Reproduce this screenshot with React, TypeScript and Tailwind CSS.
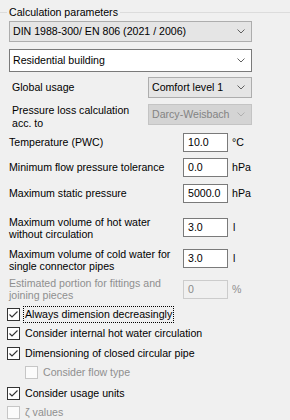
function Chevron({ disabled = false }: { disabled?: boolean }) {
  return (
    <svg width="8" height="5" viewBox="0 0 8 5" fill="none" className="shrink-0">
      <polyline
        points="0.5,0.5 4,4 7.5,0.5"
        stroke={disabled ? "#b0b0b0" : "#606060"}
        strokeWidth={1}
      />
    </svg>
  )
}

function Combo({
  value,
  variant = "gray",
  className = "",
}: {
  value: string
  variant?: "gray" | "white" | "disabled"
  className?: string
}) {
  const look =
    variant === "white"
      ? "bg-white border-[#7a7a7a] text-black"
      : variant === "disabled"
        ? "bg-[#d4d4d4] border-[#c4c4c4] text-[#838383]"
        : "bg-[#e5e5e5] border-[#adadad] text-black"
  return (
    <div
      className={`flex items-center justify-between border pl-[3px] pr-[6px] ${look} ${className}`}
    >
      <span className="whitespace-nowrap leading-[13px]">{value}</span>
      <Chevron disabled={variant === "disabled"} />
    </div>
  )
}

function NumberBox({ value, disabled = false }: { value: string; disabled?: boolean }) {
  return (
    <div
      className={`flex h-[19px] w-[45px] shrink-0 items-center border pl-[4px] leading-[13px] ${
        disabled
          ? "border-[#cccccc] bg-[#f0f0f0] text-[#8a8a8a]"
          : "border-[#7a7a7a] bg-white text-black"
      }`}
    >
      {value}
    </div>
  )
}

function Check({
  label,
  checked = false,
  disabled = false,
  focused = false,
  className = "",
}: {
  label: string
  checked?: boolean
  disabled?: boolean
  focused?: boolean
  className?: string
}) {
  return (
    <div className={`flex h-[13px] items-center ${className}`}>
      <div
        className={`flex h-[13px] w-[13px] shrink-0 items-center justify-center border ${
          disabled ? "border-[#c6c6c6] bg-[#fbfbfb]" : "border-[#333333] bg-white"
        }`}
      >
        {checked && (
          <svg width="11" height="11" viewBox="0 0 11 11" fill="none">
            <polyline points="1.5,5.5 4,8 9.5,2.5" stroke="#333333" strokeWidth={1.1} />
          </svg>
        )}
      </div>
      <span
        className={`ml-[3px] whitespace-nowrap leading-[13px] ${
          disabled ? "text-[#8f8f8f]" : "text-black"
        } ${focused ? "border border-dotted border-black px-[1px] py-[1px]" : "border border-transparent px-[1px] py-[1px]"}`}
      >
        {label}
      </span>
    </div>
  )
}

export default function App() {
  return (
    <div
      className="h-[420px] w-[290px] overflow-hidden bg-[#f0f0f0] text-[10.6px] text-black"
      style={{ fontFamily: '"Liberation Sans", Arial, sans-serif' }}
    >
      {/* group box header */}
      <div className="mt-[6px] flex h-[13px] items-center">
        <div className="h-px w-[7px] bg-[#dcdcdc]" />
        <span className="px-[2px] leading-[13px] whitespace-nowrap">Calculation parameters</span>
        <div className="h-px flex-1 bg-[#dcdcdc]" />
      </div>

      <div className="flex flex-col pl-[9px] pr-[38px]">
        <Combo value="DIN 1988-300/ EN 806 (2021 / 2006)" className="mt-[2px] h-[21px]" />
        <Combo value="Residential building" variant="white" className="mt-[7px] h-[23px]" />

        <div className="mt-[5px] flex h-[21px] items-center justify-between">
          <span className="pl-[3px] leading-[13px]">Global usage</span>
          <Combo value="Comfort level 1" className="h-[21px] w-[104px]" />
        </div>

        <div className="mt-[6px] flex h-[26px] items-start justify-between">
          <span className="pl-[3px] leading-[13px]">
            Pressure loss calculation
            <br />
            acc. to
          </span>
          <Combo value="Darcy-Weisbach" variant="disabled" className="h-[21px] w-[104px]" />
        </div>
      </div>

      <div className="flex flex-col pl-[9px]">
        <div className="mt-[3px] flex h-[19px] items-center">
          <span className="w-[174px] leading-[13px]">Temperature (PWC)</span>
          <NumberBox value="10.0" />
          <span className="ml-[4px] leading-[13px]">°C</span>
        </div>

        <div className="mt-[6px] flex h-[19px] items-center">
          <span className="w-[174px] leading-[13px]">Minimum flow pressure tolerance</span>
          <NumberBox value="0.0" />
          <span className="ml-[4px] leading-[13px]">hPa</span>
        </div>

        <div className="mt-[7px] flex h-[19px] items-center">
          <span className="w-[174px] leading-[13px]">Maximum static pressure</span>
          <NumberBox value="5000.0" />
          <span className="ml-[4px] leading-[13px]">hPa</span>
        </div>

        <div className="mt-[13px] flex h-[26px] items-start">
          <span className="w-[174px] leading-[12px]">
            Maximum volume of hot water
            <br />
            without circulation
          </span>
          <div className="mt-[2px] flex items-center">
            <NumberBox value="3.0" />
            <span className="ml-[5px] leading-[13px]">l</span>
          </div>
        </div>

        <div className="mt-[6px] flex h-[26px] items-start">
          <span className="w-[174px] leading-[12px]">
            Maximum volume of cold water for
            <br />
            single connector pipes
          </span>
          <div className="mt-[1px] flex items-center">
            <NumberBox value="3.0" />
            <span className="ml-[5px] leading-[13px]">l</span>
          </div>
        </div>

        <div className="mt-[3px] flex h-[26px] items-start text-[#8f8f8f]">
          <span className="w-[174px] leading-[12px]">
            Estimated portion for fittings and
            <br />
            joining pieces
          </span>
          <div className="mt-[3px] flex items-center">
            <NumberBox value="0" disabled />
            <span className="ml-[4px] leading-[13px]">%</span>
          </div>
        </div>
      </div>

      <div className="flex flex-col pl-[7px]">
        <Check label="Always dimension decreasingly" checked focused className="mt-[5px]" />
        <Check label="Consider internal hot water circulation" checked className="mt-[6px]" />
        <Check label="Dimensioning of closed circular pipe" checked className="mt-[7px]" />
        <Check label="Consider flow type" disabled className="ml-[18px] mt-[6px]" />
        <Check label="Consider usage units" checked className="mt-[8px]" />
        <Check label="ζ values" disabled className="mt-[6px]" />
      </div>
    </div>
  )
}
